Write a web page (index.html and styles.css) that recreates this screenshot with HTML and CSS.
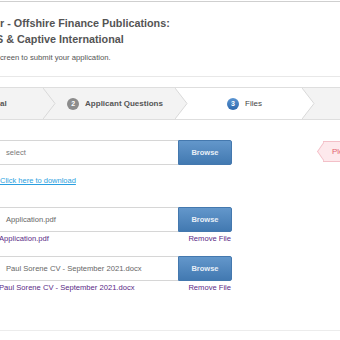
FILE: index.html
```html
<!DOCTYPE html>
<html lang="en">
<head>
  <meta charset="UTF-8" />
  <title>Apply - Files</title>
  <link rel="stylesheet" href="styles.css">
</head>
<body>
  <div class="topline"></div>

  <header class="header">
    <h1>r - Offshire Finance Publications:<br><span class="cut">S</span> &amp; Captive International</h1>
    <p class="intro">creen to submit your application.</p>
  </header>

  <nav class="steps">
    <div class="step step-first">
      <span class="step-label">al</span>
      <svg class="chev" viewBox="0 0 13 31" width="13" height="31"><polygon points="0,0 12,15.5 0,31" fill="#f3f3f3"/><polyline points="0,0 12,15.5 0,31" fill="none" stroke="#d9d9d9"/></svg>
    </div>
    <div class="step">
      <span class="num">2</span>
      <span class="step-label">Applicant Questions</span>
      <svg class="chev" viewBox="0 0 13 31" width="13" height="31"><polygon points="0,0 12,15.5 0,31" fill="#f3f3f3"/><polyline points="0,0 12,15.5 0,31" fill="none" stroke="#d9d9d9"/></svg>
    </div>
    <div class="step active">
      <span class="num">3</span>
      <span class="step-label">Files</span>
      <svg class="chev" viewBox="0 0 13 31" width="13" height="31"><polygon points="0,0 12,15.5 0,31" fill="#fff"/><polyline points="0,0 12,15.5 0,31" fill="none" stroke="#d9d9d9"/></svg>
    </div>
    <div class="step step-last"></div>
  </nav>

  <section class="files">
    <div class="file-row">
      <div class="file-input placeholder">select</div>
      <button class="browse">Browse</button>
      <div class="tip"><span class="tip-arrow"></span>Ple</div>
    </div>
    <a class="download" href="#">Click here to download</a>

    <div class="file-row row-gap">
      <div class="file-input">Application.pdf</div>
      <button class="browse">Browse</button>
    </div>
    <div class="file-meta">
      <a href="#">Application.pdf</a>
      <a href="#">Remove File</a>
    </div>

    <div class="file-row row-gap-small">
      <div class="file-input">Paul Sorene CV - September 2021.docx</div>
      <button class="browse">Browse</button>
    </div>
    <div class="file-meta">
      <a href="#">Paul Sorene CV - September 2021.docx</a>
      <a href="#">Remove File</a>
    </div>
  </section>

  <div class="bottomline"></div>
</body>
</html>
```

FILE: styles.css
```css
* {
  box-sizing: border-box;
  margin: 0;
  padding: 0;
}

html, body {
  width: 100%;
  overflow: hidden;
}

body {
  font-family: "Liberation Sans", Arial, sans-serif;
  background: #fff;
  color: #555;
}

.topline {
  margin-top: 1px;
  border-top: 1px solid #cfcfcf;
}

.header {
  padding-top: 13px;
  padding-bottom: 12px;
  border-bottom: 1px solid #e8e8e8;
}

h1 {
  font-size: 10.8px;
  line-height: 16px;
  font-weight: bold;
  color: #545454;
}

.cut {
  margin-left: -4px;
}

.intro {
  margin-top: 5px;
  font-size: 7.7px;
  line-height: 12px;
  color: #555;
}

.steps {
  display: flex;
  margin-top: 10px;
  height: 33px;
  border-top: 1px solid #dedede;
  border-bottom: 1px solid #dedede;
  background: #f3f3f3;
}

.step {
  position: relative;
  display: flex;
  align-items: center;
  justify-content: center;
  gap: 6px;
  width: 132px;
  padding-left: 12px;
  background: #f3f3f3;
  font-size: 8px;
  font-weight: bold;
  color: #555;
}

.step-first {
  width: 43px;
  padding-left: 0;
  justify-content: flex-start;
}

.step.active {
  width: 127px;
  background: #fff;
  font-weight: normal;
  color: #444;
}

.step-last {
  flex: 1;
}

.chev {
  position: absolute;
  top: 0;
  left: 100%;
  z-index: 1;
}

.num {
  width: 12px;
  height: 12px;
  border-radius: 50%;
  background: #8c8c8c;
  color: #fff;
  font-size: 7px;
  line-height: 12px;
  text-align: center;
  font-weight: bold;
}

.active .num {
  background: linear-gradient(#5b95d2, #2f69ad);
}

.files {
  padding-top: 20px;
  padding-bottom: 36px;
  border-bottom: 1px solid #ececec;
}

.file-row {
  position: relative;
  display: flex;
  width: 239px;
  height: 25px;
  margin-left: -7px;
}

.row-gap {
  margin-top: 20px;
}

.row-gap-small {
  margin-top: 11px;
}

.file-input {
  flex: 1;
  border: 1px solid #d6d6d6;
  border-right: none;
  padding-left: 12px;
  font-size: 7.6px;
  line-height: 23px;
  color: #666;
  white-space: nowrap;
  overflow: hidden;
}

.placeholder {
  color: #777;
}

.browse {
  width: 54px;
  border: 1px solid #4478ae;
  border-radius: 0 2px 2px 0;
  background: linear-gradient(#6397cb, #4279b1);
  color: #e8eff7;
  font-family: "Liberation Sans", Arial, sans-serif;
  font-size: 7.5px;
  font-weight: bold;
}

.tip {
  position: absolute;
  left: 330px;
  top: 1px;
  height: 21px;
  padding-left: 8px;
  width: 40px;
  background: #fde9ec;
  border: 1px solid #f3c0c8;
  color: #e2606f;
  font-size: 8px;
  line-height: 19px;
}

.tip-arrow {
  position: absolute;
  left: -7px;
  top: 3px;
  width: 13px;
  height: 13px;
  background: #fde9ec;
  border-left: 1px solid #f3c0c8;
  border-bottom: 1px solid #f3c0c8;
  transform: scaleX(0.7) rotate(45deg);
}

.download {
  display: inline-block;
  margin-top: 10px;
  font-size: 7.5px;
  line-height: 12px;
  color: #2a9fe0;
  text-decoration: underline;
}

.file-meta {
  display: flex;
  justify-content: space-between;
  width: 232px;
  margin-top: 1px;
  margin-left: -1px;
  font-size: 7.6px;
  line-height: 12px;
}

.file-meta a {
  color: #5a2a86;
  text-decoration: none;
}

.bottomline {
  height: 1px;
}
```
